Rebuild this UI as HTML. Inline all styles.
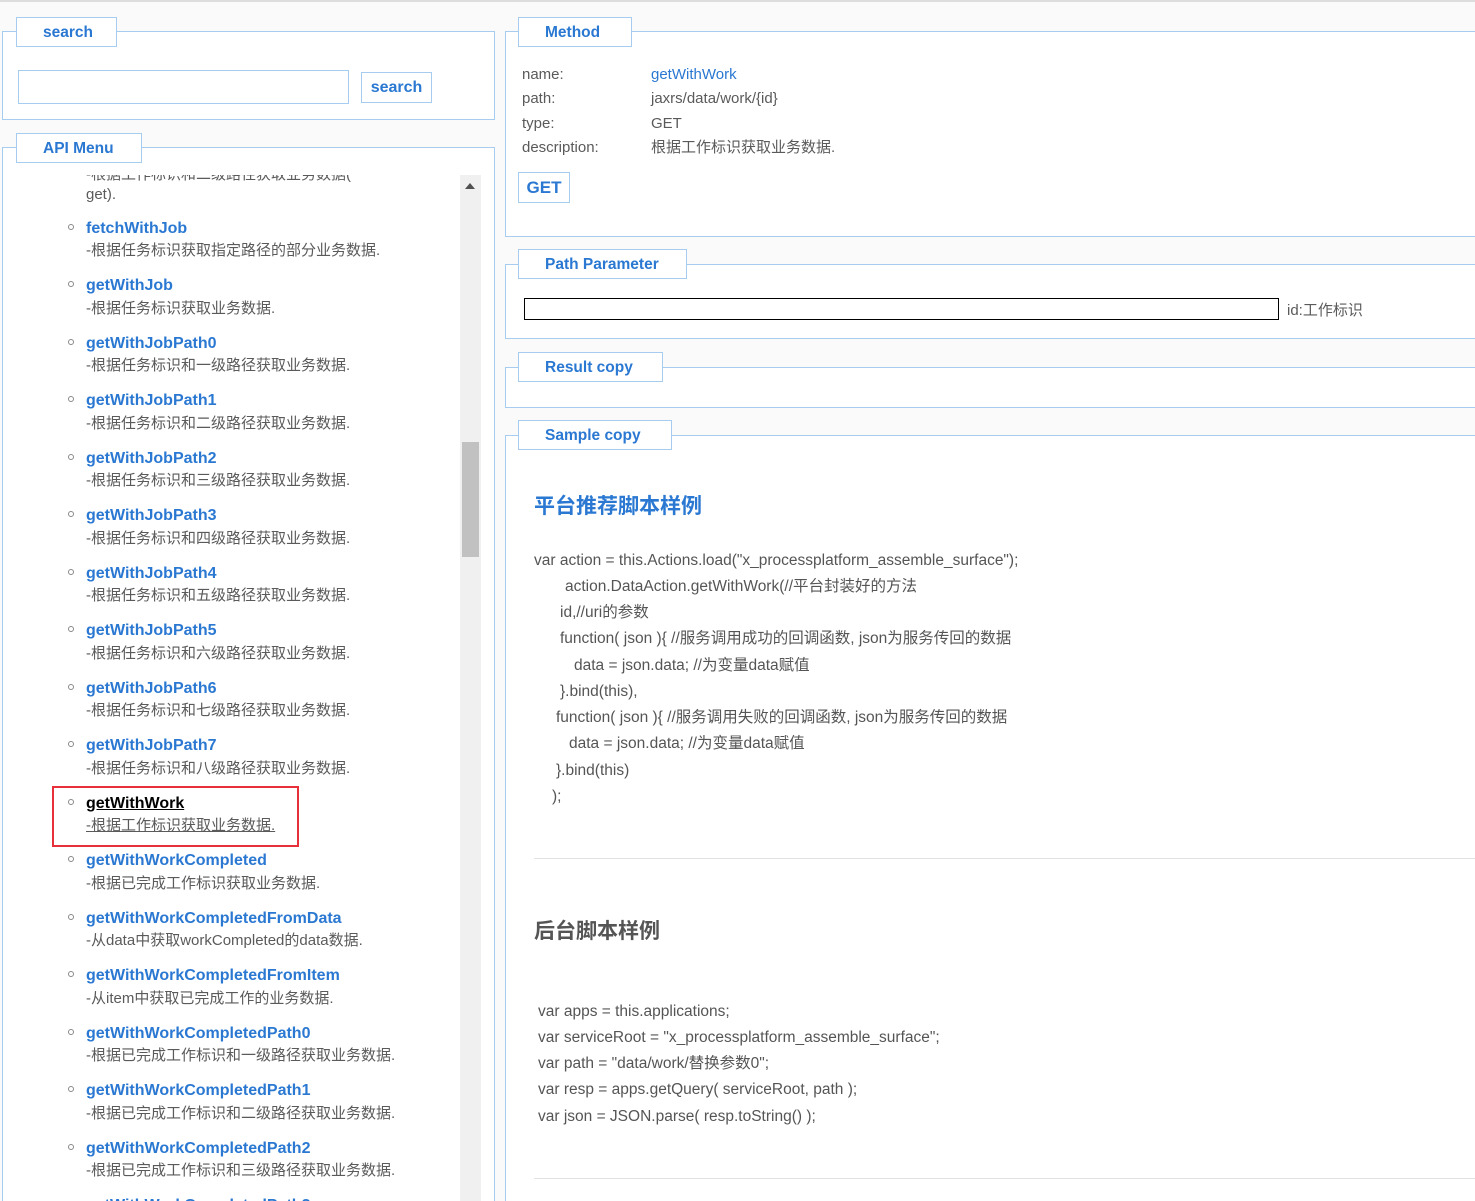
<!DOCTYPE html>
<html style="width:1475px;height:1201px;overflow:hidden"><head><meta charset="utf-8"><style>
*{margin:0;padding:0;box-sizing:border-box}
body{width:1475px;height:1201px;overflow:hidden;background:#fafafa;position:relative;font-family:"Liberation Sans","Noto Sans CJK SC",sans-serif;color:#5a5a5a;font-size:15px}
.a{position:absolute}
.t{position:absolute;white-space:nowrap;line-height:20px;margin-top:2px}
.fs{position:absolute;border:1px solid #a6cdef;background:#fff}
.lg{position:absolute;border:1px solid #a6cdef;background:#fff;color:#2a78d2;font-weight:bold;font-size:15.5px;line-height:29px;padding-left:26px}
.b{color:#2a78d2;font-weight:bold;font-size:16px}
.bul{position:absolute;width:6px;height:6px;border:1px solid #888;border-radius:50%}
.c{position:absolute;white-space:nowrap;line-height:20px;font-size:15.5px;color:#555;margin-top:2px}
</style></head><body>
<div class="a" style="left:0;top:0;width:1475px;height:2px;background:#ddd"></div>

<div class="fs" style="left:2px;top:31px;width:493px;height:89px"></div>
<div class="lg" style="left:16px;top:17px;width:101px;height:30px">search</div>
<div class="a" style="left:18px;top:70px;width:331px;height:34px;border:1px solid #a6cdef;background:#fff"></div>
<div class="a" style="left:361px;top:72px;width:71px;height:31px;border:1px solid #a6cdef;background:#fff;color:#2a78d2;font-weight:bold;font-size:16px;line-height:29px;text-align:center">search</div>

<div class="fs" style="left:2px;top:147px;width:493px;height:1070px"></div>
<div class="lg" style="left:16px;top:133px;width:126px;height:30px">API Menu</div>
<div class="a" style="left:460px;top:175px;width:21px;height:1026px;background:#f0f0f0"></div>
<div class="a" style="left:462px;top:442px;width:17px;height:115px;background:#c1c1c1"></div>
<div class="a" style="left:465px;top:183px;width:0;height:0;border-left:5px solid transparent;border-right:5px solid transparent;border-bottom:6px solid #505050"></div>

<div class="a" style="left:20px;top:175px;width:438px;height:1026px;overflow:hidden">
<div class="t" style="left:66px;top:-12px">-根据工作标识和二级路径获取业务数据(</div>
<div class="t" style="left:66px;top:8px">get).</div>
</div>

<div class="a" style="left:0;top:0;width:1475px;height:1201px;overflow:hidden">
<div class="bul" style="left:68px;top:224px"></div><div class="t b" style="left:86px;top:217px">fetchWithJob</div><div class="t" style="left:86px;top:239px">-根据任务标识获取指定路径的部分业务数据.</div>
<div class="bul" style="left:68px;top:281px"></div><div class="t b" style="left:86px;top:274px">getWithJob</div><div class="t" style="left:86px;top:297px">-根据任务标识获取业务数据.</div>
<div class="bul" style="left:68px;top:339px"></div><div class="t b" style="left:86px;top:332px">getWithJobPath0</div><div class="t" style="left:86px;top:354px">-根据任务标识和一级路径获取业务数据.</div>
<div class="bul" style="left:68px;top:396px"></div><div class="t b" style="left:86px;top:389px">getWithJobPath1</div><div class="t" style="left:86px;top:412px">-根据任务标识和二级路径获取业务数据.</div>
<div class="bul" style="left:68px;top:454px"></div><div class="t b" style="left:86px;top:447px">getWithJobPath2</div><div class="t" style="left:86px;top:469px">-根据任务标识和三级路径获取业务数据.</div>
<div class="bul" style="left:68px;top:511px"></div><div class="t b" style="left:86px;top:504px">getWithJobPath3</div><div class="t" style="left:86px;top:527px">-根据任务标识和四级路径获取业务数据.</div>
<div class="bul" style="left:68px;top:569px"></div><div class="t b" style="left:86px;top:562px">getWithJobPath4</div><div class="t" style="left:86px;top:584px">-根据任务标识和五级路径获取业务数据.</div>
<div class="bul" style="left:68px;top:626px"></div><div class="t b" style="left:86px;top:619px">getWithJobPath5</div><div class="t" style="left:86px;top:642px">-根据任务标识和六级路径获取业务数据.</div>
<div class="bul" style="left:68px;top:684px"></div><div class="t b" style="left:86px;top:677px">getWithJobPath6</div><div class="t" style="left:86px;top:699px">-根据任务标识和七级路径获取业务数据.</div>
<div class="bul" style="left:68px;top:741px"></div><div class="t b" style="left:86px;top:734px">getWithJobPath7</div><div class="t" style="left:86px;top:757px">-根据任务标识和八级路径获取业务数据.</div>
<div class="a" style="left:52px;top:786px;width:247px;height:61px;border:2px solid #e8303a"></div>
<div class="bul" style="left:68px;top:799px"></div><div class="t b" style="left:86px;top:792px;color:#000;text-decoration:underline">getWithWork</div><div class="t" style="left:86px;top:814px;text-decoration:underline">-根据工作标识获取业务数据.</div>
<div class="bul" style="left:68px;top:856px"></div><div class="t b" style="left:86px;top:849px">getWithWorkCompleted</div><div class="t" style="left:86px;top:872px">-根据已完成工作标识获取业务数据.</div>
<div class="bul" style="left:68px;top:914px"></div><div class="t b" style="left:86px;top:907px">getWithWorkCompletedFromData</div><div class="t" style="left:86px;top:929px">-从data中获取workCompleted的data数据.</div>
<div class="bul" style="left:68px;top:971px"></div><div class="t b" style="left:86px;top:964px">getWithWorkCompletedFromItem</div><div class="t" style="left:86px;top:987px">-从item中获取已完成工作的业务数据.</div>
<div class="bul" style="left:68px;top:1029px"></div><div class="t b" style="left:86px;top:1022px">getWithWorkCompletedPath0</div><div class="t" style="left:86px;top:1044px">-根据已完成工作标识和一级路径获取业务数据.</div>
<div class="bul" style="left:68px;top:1086px"></div><div class="t b" style="left:86px;top:1079px">getWithWorkCompletedPath1</div><div class="t" style="left:86px;top:1102px">-根据已完成工作标识和二级路径获取业务数据.</div>
<div class="bul" style="left:68px;top:1144px"></div><div class="t b" style="left:86px;top:1137px">getWithWorkCompletedPath2</div><div class="t" style="left:86px;top:1159px">-根据已完成工作标识和三级路径获取业务数据.</div>
<div class="t b" style="left:86px;top:1194px">getWithWorkCompletedPath3</div>

<div class="fs" style="left:505px;top:31px;width:980px;height:206px"></div>
<div class="lg" style="left:518px;top:17px;width:114px;height:30px">Method</div>
<div class="t" style="left:522px;top:63px">name:</div><div class="t" style="left:651px;top:63px;color:#2a78d2">getWithWork</div>
<div class="t" style="left:522px;top:87px">path:</div><div class="t" style="left:651px;top:87px">jaxrs/data/work/{id}</div>
<div class="t" style="left:522px;top:112px">type:</div><div class="t" style="left:651px;top:112px">GET</div>
<div class="t" style="left:522px;top:136px">description:</div><div class="t" style="left:651px;top:136px">根据工作标识获取业务数据.</div>
<div class="a" style="left:518px;top:172px;width:52px;height:31px;border:1px solid #a6cdef;color:#2a78d2;font-weight:bold;font-size:17px;line-height:29px;text-align:center">GET</div>

<div class="fs" style="left:505px;top:264px;width:980px;height:75px"></div>
<div class="lg" style="left:518px;top:249px;width:169px;height:30px">Path Parameter</div>
<div class="a" style="left:524px;top:298px;width:755px;height:22px;border:1px solid #000;background:#fff"></div>
<div class="t" style="left:1287px;top:299px">id:工作标识</div>

<div class="fs" style="left:505px;top:367px;width:980px;height:41px"></div>
<div class="lg" style="left:518px;top:352px;width:145px;height:30px">Result copy</div>

<div class="fs" style="left:505px;top:435px;width:980px;height:800px"></div>
<div class="lg" style="left:518px;top:420px;width:154px;height:30px">Sample copy</div>
<div class="t" style="left:534px;top:492px;font-size:21px;line-height:26px;font-weight:bold;color:#2a78d2">平台推荐脚本样例</div>
<div class="c" style="left:534px;top:549px">var action = this.Actions.load("x_processplatform_assemble_surface");</div>
<div class="c" style="left:565px;top:575px">action.DataAction.getWithWork(//平台封装好的方法</div>
<div class="c" style="left:560px;top:601px">id,//uri的参数</div>
<div class="c" style="left:560px;top:627px">function( json ){ //服务调用成功的回调函数, json为服务传回的数据</div>
<div class="c" style="left:574px;top:654px">data = json.data; //为变量data赋值</div>
<div class="c" style="left:560px;top:680px">}.bind(this),</div>
<div class="c" style="left:556px;top:706px">function( json ){ //服务调用失败的回调函数, json为服务传回的数据</div>
<div class="c" style="left:569px;top:732px">data = json.data; //为变量data赋值</div>
<div class="c" style="left:556px;top:759px">}.bind(this)</div>
<div class="c" style="left:552px;top:785px">);</div>
<div class="a" style="left:534px;top:858px;width:941px;height:1px;background:#e2e2e2"></div>
<div class="t" style="left:534px;top:917px;font-size:21px;line-height:26px;font-weight:bold;color:#555">后台脚本样例</div>
<div class="c" style="left:538px;top:1000px">var apps = this.applications;</div>
<div class="c" style="left:538px;top:1026px">var serviceRoot = "x_processplatform_assemble_surface";</div>
<div class="c" style="left:538px;top:1052px">var path = "data/work/替换参数0";</div>
<div class="c" style="left:538px;top:1078px">var resp = apps.getQuery( serviceRoot, path );</div>
<div class="c" style="left:538px;top:1105px">var json = JSON.parse( resp.toString() );</div>
<div class="a" style="left:534px;top:1178px;width:941px;height:1px;background:#e2e2e2"></div>
</div>
</body></html>
